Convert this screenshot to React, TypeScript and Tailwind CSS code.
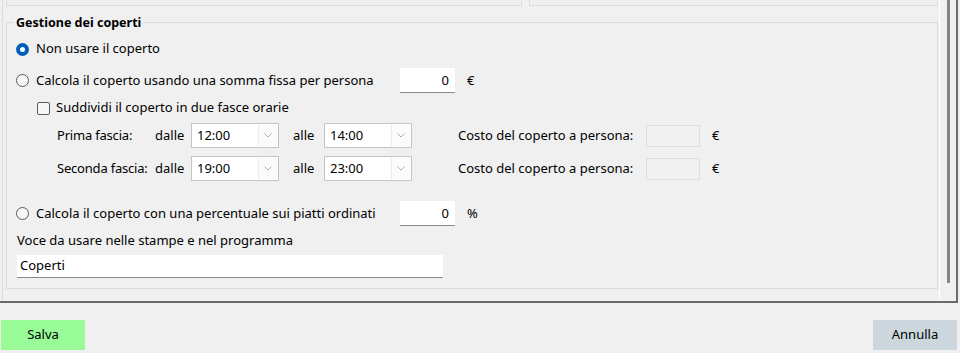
import React from 'react';

const font = { fontFamily: '"Noto Sans", "Open Sans", sans-serif' };

function Radio({ checked }: { checked?: boolean }) {
  return checked ? (
    <span className="w-[13px] h-[13px] rounded-full bg-[#005fb8] flex items-center justify-center shrink-0">
      <span className="w-[5px] h-[5px] rounded-full bg-white" />
    </span>
  ) : (
    <span className="w-[13px] h-[13px] rounded-full border border-[#5a5a5a] bg-[#f7f7f7] shrink-0" />
  );
}

function NumBox({ value }: { value: string }) {
  return (
    <div className="w-[55px] h-[25px] bg-white border-b border-[#8a8a8a] flex items-center justify-end pr-[6px] pt-[1px]">
      {value}
    </div>
  );
}

function Combo({ value }: { value: string }) {
  return (
    <div className="w-[88px] h-[25px] border border-[#c4c4c4] bg-white flex p-[1px]">
      <div className="flex-1 flex items-center pl-[4px] border-r border-[#ececec]">{value}</div>
      <div className="w-[18px] flex items-center justify-center bg-[#fbfbfb]">
        <svg width="8" height="5" viewBox="0 0 8 5">
          <path d="M0.5 0.5 L4 4 L7.5 0.5" fill="none" stroke="#b0b0b0" strokeWidth="1" />
        </svg>
      </div>
    </div>
  );
}

function FasciaRow({ label, from, to, className }: { label: string; from: string; to: string; className?: string }) {
  return (
    <div className={`flex items-center h-[25px] ${className ?? ''}`}>
      <span className="ml-[41px] w-[98px] tracking-[-0.2px]">{label}</span>
      <span className="w-[36px]">dalle</span>
      <Combo value={from} />
      <span className="ml-[14px] w-[31px]">alle</span>
      <Combo value={to} />
      <span className="ml-[46px] w-[188px]">Costo del coperto a persona:</span>
      <div className="w-[54px] h-[22px] border border-[#dedede] bg-[#f0f0f0]" />
      <span className="ml-[12px]">€</span>
    </div>
  );
}

export default function App() {
  return (
    <div className="w-[960px] h-[353px] bg-[#f0f0f0] text-[13px] text-black overflow-hidden" style={font}>
      <div className="w-[958px] h-[303px] flex border-r-2 border-b-2 border-[#6b6b6b]">
        <div className="w-[939px] pl-[2px]">
          <div className="h-full border-l border-[#dcdcdc] pl-[3px]">
            <div className="flex h-[6px]">
              <div className="w-[516px] border-x border-b border-[#dcdcdc]" />
              <div className="ml-[7px] w-[409px] border-x border-b border-[#dcdcdc]" />
            </div>
            <div className="relative mt-[16px] w-[932px] border border-[#dcdcdc] pl-[9px] pt-[16px] pb-[10px]">
              <span className="absolute -top-[8px] left-[7px] px-[2px] bg-[#f0f0f0] font-bold text-[12.5px] leading-[16px]">Gestione dei coperti</span>

              <div className="flex items-center h-[20px] gap-[7px]">
                <Radio checked />
                <span>Non usare il coperto</span>
              </div>

              <div className="flex items-center h-[25px] mt-[9px]">
                <div className="w-[384px] flex items-center gap-[7px]">
                  <Radio />
                  <span>Calcola il coperto usando una somma fissa per persona</span>
                </div>
                <NumBox value="0" />
                <span className="ml-[12px]">€</span>
              </div>

              <div className="flex items-center h-[20px] mt-[5px] ml-[21px] gap-[6px]">
                <span className="w-[13px] h-[13px] border border-[#5a5a5a] rounded-[2px] bg-[#f7f7f7]" />
                <span>Suddividi il coperto in due fasce orarie</span>
              </div>

              <FasciaRow label="Prima fascia:" from="12:00" to="14:00" className="mt-[5px]" />
              <FasciaRow label="Seconda fascia:" from="19:00" to="23:00" className="mt-[8px]" />

              <div className="flex items-center h-[25px] mt-[20px]">
                <div className="w-[384px] flex items-center gap-[7px]">
                  <Radio />
                  <span>Calcola il coperto con una percentuale sui piatti ordinati</span>
                </div>
                <NumBox value="0" />
                <span className="ml-[12px]">%</span>
              </div>

              <div className="h-[16px] mt-[7px] ml-[1px] flex items-center">Voce da usare nelle stampe e nel programma</div>
              <div className="mt-[6px] ml-[1px] w-[426px] h-[23px] bg-white border-b border-[#8a8a8a] flex items-center pl-[3px]">
                Coperti
              </div>
            </div>
          </div>
        </div>
        <div className="w-[17px] border-l border-white pl-[7px]">
          <div className="w-[3px] h-[283px] bg-[#858585]" />
        </div>
      </div>

      <div className="flex justify-between mt-[17px] pl-[1px] pr-[3px]">
        <button className="w-[84px] h-[30px] bg-[#98fb98] flex items-center justify-center">Salva</button>
        <button className="w-[84px] h-[30px] bg-[#ccd6dd] flex items-center justify-center">Annulla</button>
      </div>
    </div>
  );
}
